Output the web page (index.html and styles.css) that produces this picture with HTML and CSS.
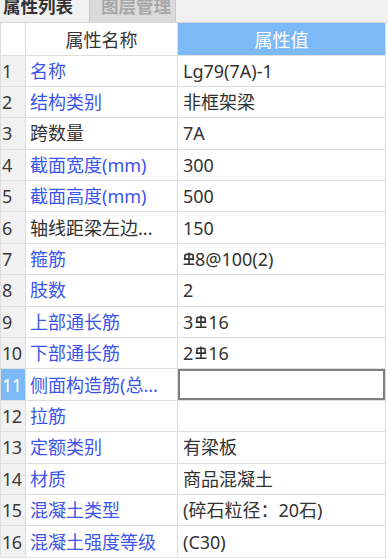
FILE: index.html
```html
<!DOCTYPE html>
<html lang="zh-CN">
<head>
<meta charset="utf-8">
<title>属性列表</title>
<link rel="stylesheet" href="styles.css">
</head>
<body>
<div class="panel">
  <div class="tabs">
    <div class="tab tab-active"><span class="tab-label">属性列表</span></div>
    <div class="tab tab-inactive"><span class="tab-label">图层管理</span></div>
    <div class="tab-fill"></div>
  </div>
  <table class="grid">
    <colgroup>
      <col class="c-num">
      <col class="c-name">
      <col class="c-val">
    </colgroup>
    <thead>
      <tr class="head">
        <th class="num"></th>
        <th class="hname">属性名称</th>
        <th class="hval">属性值</th>
      </tr>
    </thead>
    <tbody>
      <tr><td class="num">1</td><td class="name">名称</td><td class="val">Lg79(7A)-1</td></tr>
      <tr><td class="num">2</td><td class="name">结构类别</td><td class="val">非框架梁</td></tr>
      <tr><td class="num">3</td><td class="name dark">跨数量</td><td class="val">7A</td></tr>
      <tr><td class="num">4</td><td class="name">截面宽度(mm)</td><td class="val">300</td></tr>
      <tr><td class="num">5</td><td class="name">截面高度(mm)</td><td class="val">500</td></tr>
      <tr><td class="num">6</td><td class="name dark">轴线距梁左边...</td><td class="val">150</td></tr>
      <tr><td class="num">7</td><td class="name">箍筋</td><td class="val"><svg class="steel" viewBox="0 0 10 11"><path d="M5 0.5V10.5M1.5 6V3.2Q1.5 2 2.7 2H7.3Q8.5 2 8.5 3.2V6M0.6 6H9.4M0.4 10.4H9.6"/></svg>8@100(2)</td></tr>
      <tr><td class="num">8</td><td class="name">肢数</td><td class="val">2</td></tr>
      <tr><td class="num">9</td><td class="name">上部通长筋</td><td class="val">3<svg class="steel gap" viewBox="0 0 10 11"><path d="M5 0.5V10.5M1.5 6V3.2Q1.5 2 2.7 2H7.3Q8.5 2 8.5 3.2V6M0.6 6H9.4M0.4 10.4H9.6"/></svg>16</td></tr>
      <tr><td class="num">10</td><td class="name">下部通长筋</td><td class="val">2<svg class="steel gap" viewBox="0 0 10 11"><path d="M5 0.5V10.5M1.5 6V3.2Q1.5 2 2.7 2H7.3Q8.5 2 8.5 3.2V6M0.6 6H9.4M0.4 10.4H9.6"/></svg>16</td></tr>
      <tr><td class="num selected">11</td><td class="name">侧面构造筋(总...</td><td class="val focused"></td></tr>
      <tr><td class="num">12</td><td class="name">拉筋</td><td class="val"></td></tr>
      <tr><td class="num">13</td><td class="name">定额类别</td><td class="val">有梁板</td></tr>
      <tr><td class="num">14</td><td class="name">材质</td><td class="val">商品混凝土</td></tr>
      <tr><td class="num">15</td><td class="name">混凝土类型</td><td class="val">(碎石粒径：20石)</td></tr>
      <tr><td class="num">16</td><td class="name">混凝土强度等级</td><td class="val">(C30)</td></tr>
    </tbody>
  </table>
</div>
</body>
</html>
```
FILE: styles.css
```css
* { box-sizing: border-box; }
html, body {
  margin: 0;
  padding: 0;
  background: #ffffff;
}
body {
  width: 388px;
  height: 558px;
  overflow: hidden;
  font-family: "Noto Sans", "Noto Sans CJK SC", sans-serif;
  color: #333333;
}
.panel {
  width: 388px;
}
.tabs {
  display: flex;
  height: 23px;
  background: #f0f0f0;
  border-bottom: 1px solid #d6d6d6;
  overflow: hidden;
}
.tab {
  height: 22px;
  overflow: hidden;
}
.tab-label {
  display: block;
  margin-top: -3px;
  font-family: "Noto Sans CJK SC", sans-serif;
  font-size: 17.5px;
  line-height: 18px;
  font-weight: 700;
  white-space: nowrap;
}
.tab-active {
  width: 89px;
  padding-left: 3px;
  background: #f0f0f0;
  color: #333333;
}
.tab-inactive {
  width: 87px;
  padding-left: 11px;
  background: #dadada;
  border-left: 1px solid #c9c9c9;
  border-right: 1px solid #c9c9c9;
  color: #a8a8a8;
}
.tab-fill {
  flex: 1;
}
.grid {
  width: 385px;
  table-layout: fixed;
  border-collapse: collapse;
  border-right: 1px solid #d2d2d2;
}
.c-num { width: 25px; }
.c-name { width: 152px; }
.c-val { width: 208px; }
.grid th, .grid td {
  border: 1px solid #dedede;
  padding: 0;
  white-space: nowrap;
  overflow: hidden;
  font-weight: 400;
  font-size: 18px;
  vertical-align: middle;
}
.head th {
  height: 32px;
  border-top: none;
}
.grid tbody tr {
  height: 31.4px;
}
.grid td {
  height: 31.4px;
  line-height: 20px;
}
.num {
  background: #f1f1f1;
  text-align: left;
  padding-left: 1px !important;
  color: #3a3a3a;
  font-family: "Noto Sans", sans-serif;
  letter-spacing: -0.6px;
}
.head .num {
  background: #ffffff;
}
.hname {
  background: #ffffff;
  text-align: center;
  color: #333333;
  font-family: "Noto Sans CJK SC", sans-serif;
}
.hval {
  background: #7cb9f7;
  color: #ffffff;
  text-align: center;
  font-family: "Noto Sans CJK SC", sans-serif;
}
.name {
  padding-left: 4px !important;
  color: #3c55ee;
}
.name.dark {
  color: #333333;
}
.val {
  padding-left: 5px !important;
  color: #333333;
}
.selected {
  background: #7cb9f7;
  color: #ffffff;
}
.focused {
  box-shadow: inset 0 0 0 2px #7f7f7f;
}
.steel {
  width: 12px;
  height: 13px;
  vertical-align: 1px;
  margin-right: 0px;
  fill: none;
  stroke: #333333;
  stroke-width: 1.35;
}
.steel.gap {
  margin-left: 2px;
  margin-right: 1px;
}
```
